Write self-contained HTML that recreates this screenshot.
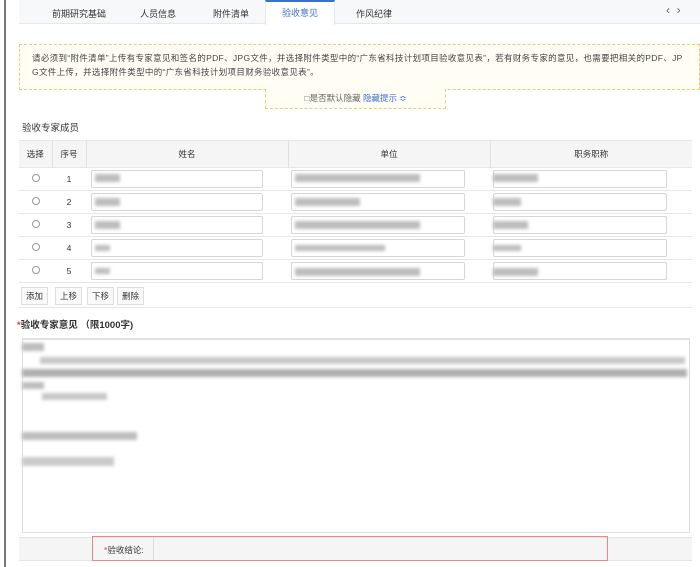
<!DOCTYPE html>
<html><head><meta charset="utf-8"><style>
*{box-sizing:border-box;margin:0;padding:0}
body{width:700px;height:567px;background:#fff;font-family:"Liberation Sans","Noto Sans CJK SC",sans-serif;font-size:9px;color:#333;position:relative;overflow:hidden}
.a{position:absolute}
.tabs{left:19px;top:0;width:681px;height:24px;background:#f7f8fa;border-bottom:1px solid #e4e7ed}
.tab{position:absolute;top:7px;font-size:9px;color:#333}
.act{left:265px;top:0;width:70px;height:25px;background:#fff;border-top:2px solid #3c6fc8;border-left:1px solid #e4e7ed;border-right:1px solid #e4e7ed;text-align:center;line-height:22px;color:#3c6fc8}
.note{left:19px;top:44px;width:681px;height:46px;background:#fffdf4;border:1px dashed #f0c878;padding:6px 0 0 12px;line-height:14px;font-size:8.5px;letter-spacing:0.33px;white-space:nowrap;color:#444}
.note2{left:265px;top:89px;width:181px;height:20px;background:#fffdf4;border:1px dashed #f0c878;border-top:none;text-align:center;line-height:18px;font-size:8.5px;color:#666}
table{position:absolute;left:19px;top:140px;width:673px;border-collapse:collapse}
td,th{border-bottom:1px solid #e6e6e6;font-weight:normal;text-align:center;height:23px;font-size:8.5px}
th{background:#f5f5f5;height:27px;border-right:1px solid #e0e0e0;border-top:1px solid #e6e6e6}
.inp{display:inline-block;height:18px;border:1px solid #d6d6d6;border-radius:2px;background:#fff;vertical-align:middle}
.rad{display:inline-block;width:8px;height:8px;border:1px solid #999;border-radius:50%}
.bl{position:absolute;background:#bdbdbd;filter:blur(1.5px)}
.btn{position:absolute;top:287px;height:18px;border:1px solid #ddd;background:#fafafa;font-size:8.5px;line-height:16px;padding:0 4px}
</style></head><body>
<div class="a" style="left:4px;top:0;width:2px;height:567px;background:#777"></div>
<div class="a tabs"></div>
<div class="tab" style="left:52px">前期研究基础</div>
<div class="tab" style="left:140px">人员信息</div>
<div class="tab" style="left:213px">附件清单</div>
<div class="a act">验收意见</div>
<div class="tab" style="left:356px">作风纪律</div>
<div class="tab" style="left:666px;font-size:12px;top:3px;color:#666">‹&nbsp;&nbsp;›</div>
<div class="a note">请必须到“附件清单”上传有专家意见和签名的PDF、JPG文件，并选择附件类型中的“广东省科技计划项目验收意见表”，若有财务专家的意见，也需要把相关的PDF、JP<br>G文件上传，并选择附件类型中的“广东省科技计划项目财务验收意见表”。</div>
<div class="a note2">□是否默认隐藏 <span style="color:#3c6fc8">隐藏提示 ≎</span></div>
<div class="a" style="left:22px;top:120px;font-size:9.5px">验收专家成员</div>
<table>
<tr><th style="width:33px">选择</th><th style="width:34px">序号</th><th style="width:202px">姓名</th><th style="width:202px">单位</th><th style="border-right:none">职务职称</th></tr>
<tr><td><span class="rad"></span></td><td>1</td><td style="text-align:left;padding-left:5px"><span class="inp" style="width:172px"></span></td><td style="text-align:left;padding-left:3px"><span class="inp" style="width:174px"></span></td><td style="text-align:left;padding-left:3px"><span class="inp" style="width:174px"></span></td></tr>
<tr><td><span class="rad"></span></td><td>2</td><td style="text-align:left;padding-left:5px"><span class="inp" style="width:172px"></span></td><td style="text-align:left;padding-left:3px"><span class="inp" style="width:174px"></span></td><td style="text-align:left;padding-left:3px"><span class="inp" style="width:174px"></span></td></tr>
<tr><td><span class="rad"></span></td><td>3</td><td style="text-align:left;padding-left:5px"><span class="inp" style="width:172px"></span></td><td style="text-align:left;padding-left:3px"><span class="inp" style="width:174px"></span></td><td style="text-align:left;padding-left:3px"><span class="inp" style="width:174px"></span></td></tr>
<tr><td><span class="rad"></span></td><td>4</td><td style="text-align:left;padding-left:5px"><span class="inp" style="width:172px"></span></td><td style="text-align:left;padding-left:3px"><span class="inp" style="width:174px"></span></td><td style="text-align:left;padding-left:3px"><span class="inp" style="width:174px"></span></td></tr>
<tr><td><span class="rad"></span></td><td>5</td><td style="text-align:left;padding-left:5px"><span class="inp" style="width:172px"></span></td><td style="text-align:left;padding-left:3px"><span class="inp" style="width:174px"></span></td><td style="text-align:left;padding-left:3px"><span class="inp" style="width:174px"></span></td></tr>
<tr><td colspan="5" style="height:25px"></td></tr>
</table>
<div class="bl" style="left:95px;top:174px;width:25px;height:8px"></div>
<div class="bl" style="left:95px;top:198px;width:25px;height:8px"></div>
<div class="bl" style="left:95px;top:221px;width:25px;height:8px"></div>
<div class="bl" style="left:95px;top:245px;width:15px;height:6px"></div>
<div class="bl" style="left:95px;top:268px;width:15px;height:6px"></div>
<div class="bl" style="left:295px;top:174px;width:125px;height:8px"></div>
<div class="bl" style="left:295px;top:198px;width:65px;height:8px"></div>
<div class="bl" style="left:295px;top:221px;width:125px;height:8px"></div>
<div class="bl" style="left:295px;top:245px;width:90px;height:6px"></div>
<div class="bl" style="left:295px;top:268px;width:125px;height:8px"></div>
<div class="bl" style="left:493px;top:174px;width:45px;height:8px"></div>
<div class="bl" style="left:493px;top:198px;width:28px;height:8px"></div>
<div class="bl" style="left:493px;top:221px;width:35px;height:8px"></div>
<div class="bl" style="left:493px;top:245px;width:28px;height:6px"></div>
<div class="bl" style="left:493px;top:268px;width:45px;height:8px"></div>
<div class="btn" style="left:21px">添加</div>
<div class="btn" style="left:55px">上移</div>
<div class="btn" style="left:87px">下移</div>
<div class="btn" style="left:117px">删除</div>
<div class="a" style="left:17px;top:317px;font-size:9.5px;font-weight:bold"><span style="color:#e33">*</span>验收专家意见 （限1000字)</div>
<div class="a" style="left:22px;top:338px;width:668px;height:195px;border:1px solid #ddd;border-top:2px solid #e0e0e0"></div>
<div class="bl" style="left:22px;top:343px;width:22px;height:8px"></div>
<div class="bl" style="left:40px;top:357px;width:645px;height:7px;background:#c8c8c8"></div>
<div class="bl" style="left:22px;top:369px;width:665px;height:8px;background:#b0b0b0"></div>
<div class="bl" style="left:22px;top:382px;width:22px;height:7px"></div>
<div class="bl" style="left:42px;top:393px;width:65px;height:7px;background:#c8c8c8"></div>
<div class="bl" style="left:22px;top:432px;width:115px;height:8px"></div>
<div class="bl" style="left:22px;top:457px;width:92px;height:9px;background:#cacaca"></div>
<div class="a" style="left:19px;top:537px;width:673px;height:24px;background:#f5f5f5;border-top:1px solid #e4e4e4;border-bottom:1px solid #e4e4e4"></div>
<div class="a" style="left:92px;top:536px;width:516px;height:25px;border:1px solid #e88;"></div>
<div class="a" style="left:153px;top:537px;width:1px;height:23px;background:#ddd"></div>
<div class="a" style="left:104px;top:544px;font-size:8.5px"><span style="color:#e33">*</span>验收结论:</div>
</body></html>
